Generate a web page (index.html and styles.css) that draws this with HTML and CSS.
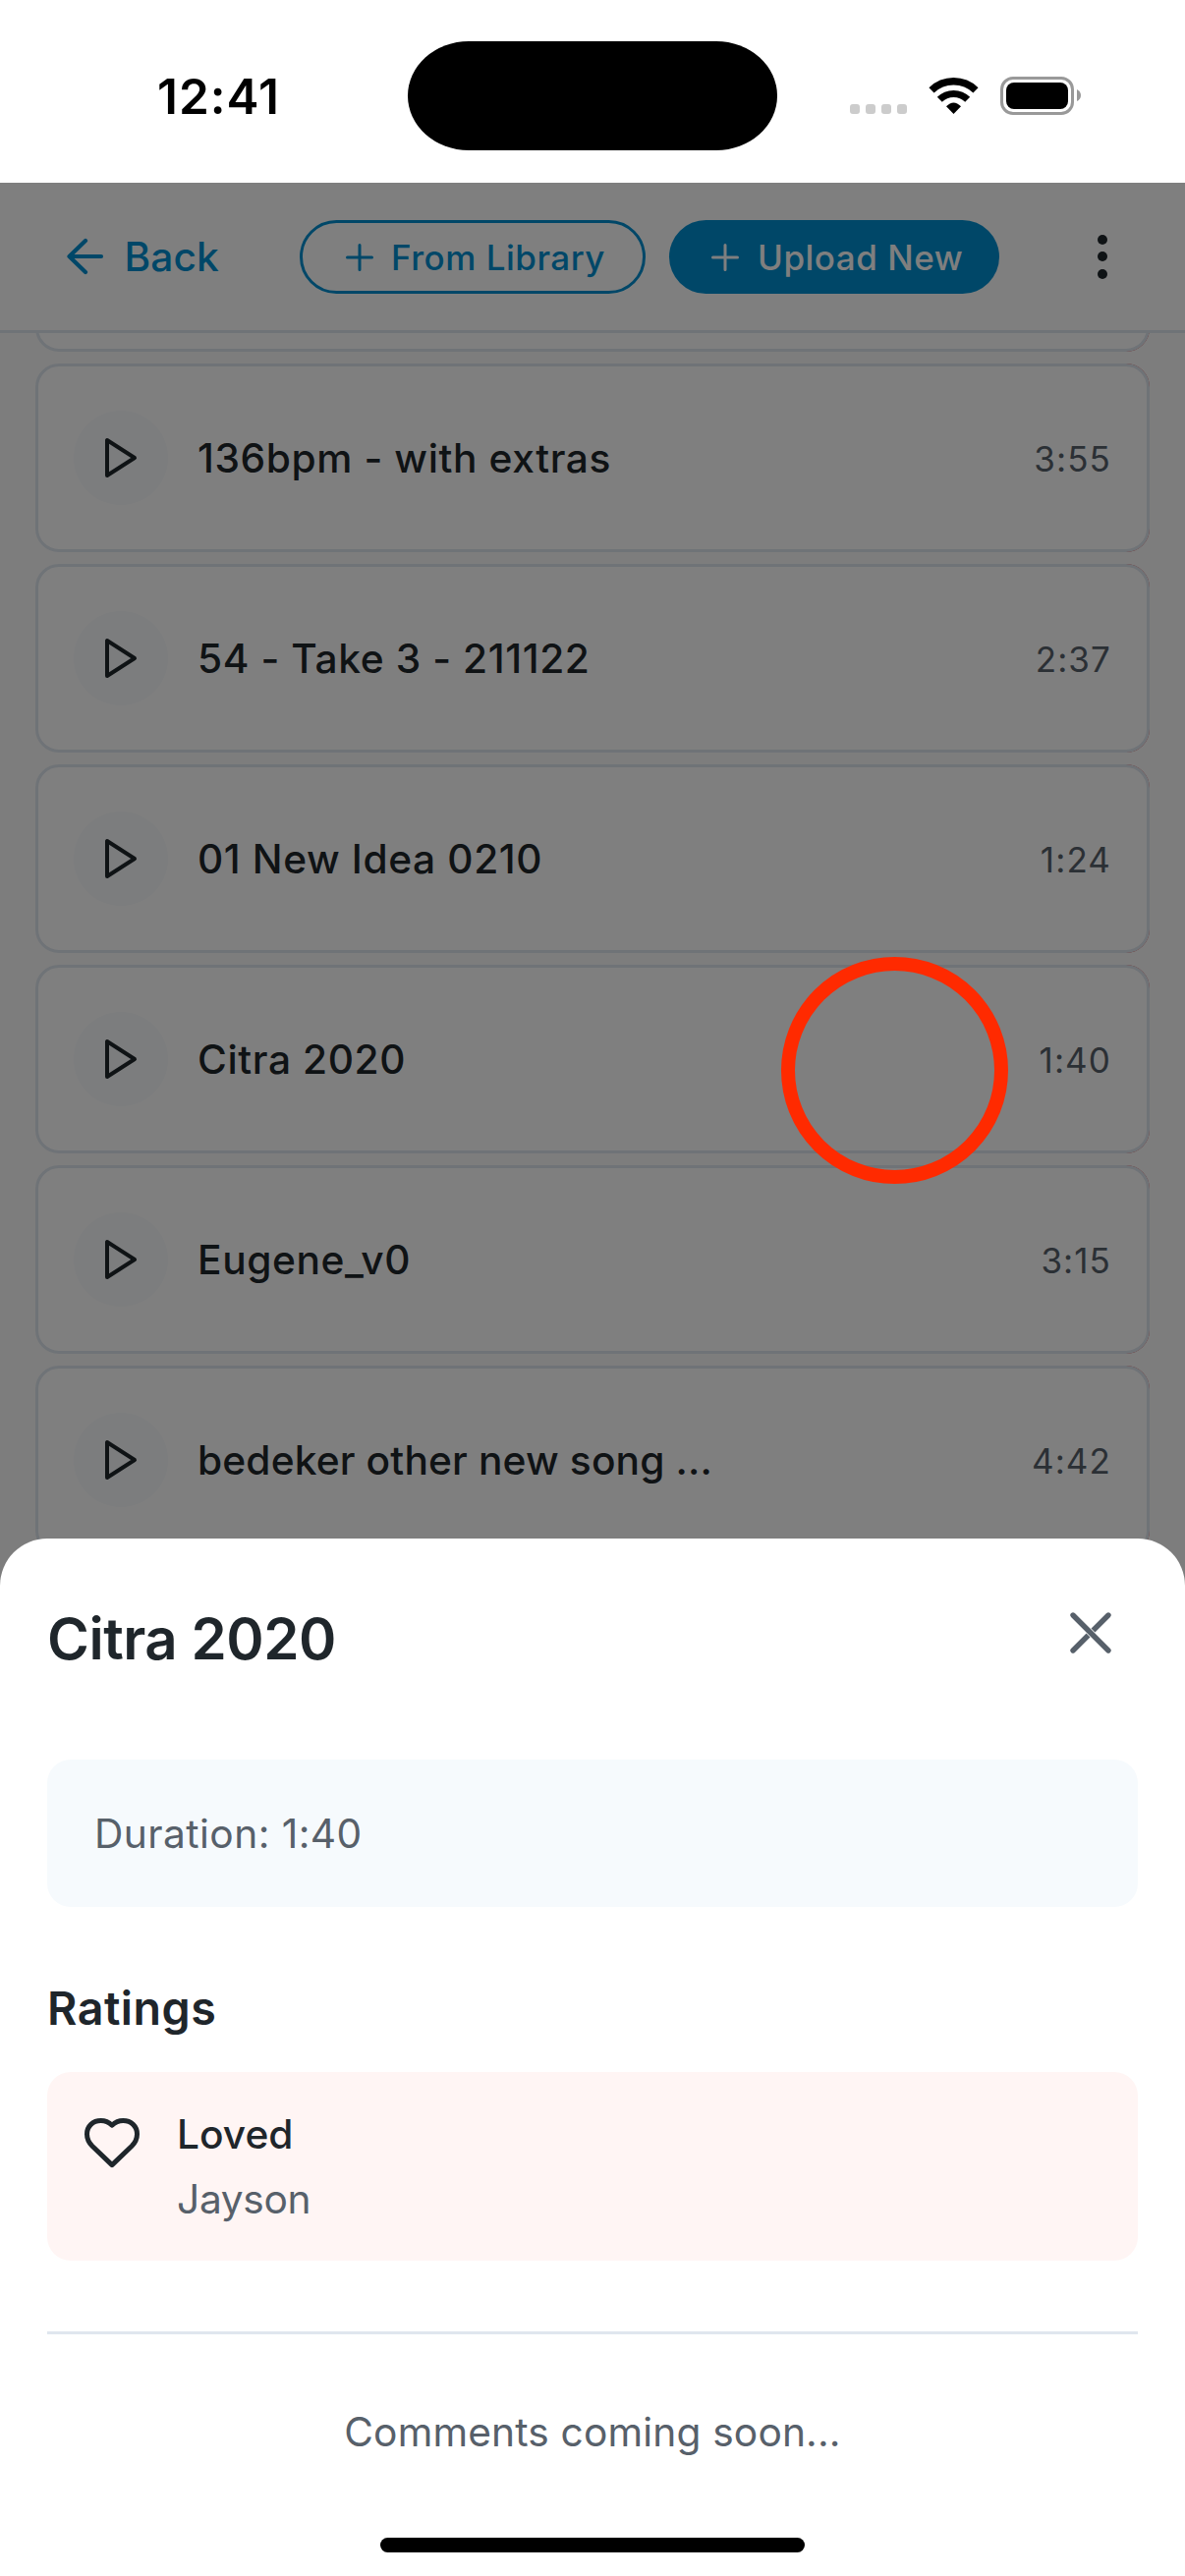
FILE: index.html
```html
<!DOCTYPE html>
<html lang="en">
<head>
<meta charset="utf-8">
<title>Citra 2020</title>
<link rel="stylesheet" href="styles.css">
</head>
<body>
<svg class="defs" width="0" height="0" aria-hidden="true">
  <symbol id="play" viewBox="0 0 48 48"><path d="M10 6V42L38 24Z" fill="none" stroke="currentColor" stroke-width="4" stroke-linejoin="round"/></symbol>
  <symbol id="plus" viewBox="0 0 28 28"><path d="M14 1.5V26.5M1.5 14H26.5" fill="none" stroke="currentColor" stroke-width="3" stroke-linecap="round"/></symbol>
</svg>

<div class="status">
  <div class="clock">12:41</div>
  <div class="island"></div>
  <div class="indicators">
    <div class="signal"><i></i><i></i><i></i><i></i></div>
    <svg class="wifi" viewBox="0 0 51 39"><g fill="none" stroke="#000"><path d="M3 13.8A32.4 32.4 0 0 1 48 13.8" stroke-width="7.4"/><path d="M11.3 23.3A20 20 0 0 1 39.7 23.3" stroke-width="7"/></g><path d="M18 30.2Q25.5 22.6 33 30.2L25.5 38Z"/></svg>
    <div class="battery"><div class="charge"></div></div>
    <svg class="nub" viewBox="0 0 4 12"><path d="M0 0Q4 2 4 6Q4 10 0 12Z" fill="#999"/></svg>
  </div>
</div>

<div class="screen">
  <header class="topbar">
    <a class="back">
      <svg class="arrow" viewBox="0 0 42 42"><path d="M21 5L4.5 21L21 37M4.5 21H37" fill="none" stroke="currentColor" stroke-width="4.2" stroke-linecap="round" stroke-linejoin="round"/></svg>
      <span>Back</span>
    </a>
    <a class="btn outline"><svg class="plus"><use href="#plus"/></svg><span>From Library</span></a>
    <a class="btn filled"><svg class="plus"><use href="#plus"/></svg><span>Upload New</span></a>
    <div class="menu"><i></i><i></i><i></i></div>
  </header>

  <main class="list">
    <div class="swipe"><div class="card"></div></div>
    <div class="swipe"><div class="card"><div class="play"><svg><use href="#play"/></svg></div><span class="name">136bpm - with extras</span><span class="time">3:55</span></div></div>
    <div class="swipe"><div class="card"><div class="play"><svg><use href="#play"/></svg></div><span class="name">54 - Take 3 - 211122</span><span class="time">2:37</span></div></div>
    <div class="swipe"><div class="card"><div class="play"><svg><use href="#play"/></svg></div><span class="name">01 New Idea 0210</span><span class="time">1:24</span></div></div>
    <div class="swipe"><div class="card"><div class="play"><svg><use href="#play"/></svg></div><span class="name">Citra 2020</span><span class="time">1:40</span></div></div>
    <div class="swipe"><div class="card"><div class="play"><svg><use href="#play"/></svg></div><span class="name">Eugene_v0</span><span class="time">3:15</span></div></div>
    <div class="swipe"><div class="card"><div class="play"><svg><use href="#play"/></svg></div><span class="name long">bedeker other new song ...</span><span class="time">4:42</span></div></div>
  </main>

  <div class="backdrop"></div>
  <div class="tap"></div>

  <section class="sheet">
    <div class="sheet-head">
      <h1>Citra 2020</h1>
      <svg class="close" viewBox="0 0 48 48"><g fill="none" stroke-linecap="round"><path d="M42 6L6 42" stroke="#57606a" stroke-width="5.4"/><path d="M17 17L31 31" stroke="#fff" stroke-width="7"/><path d="M6 6L42 42" stroke="#57606a" stroke-width="5.4"/></g></svg>
    </div>
    <div class="duration">Duration: 1:40</div>
    <h2>Ratings</h2>
    <div class="rating">
      <svg class="heart" viewBox="0 0 60 60"><path d="M30 12.3C26.5 9 22.5 7.6 18.7 7.6C10.5 7.6 4.5 13.2 4.5 21.2C4.5 26 6.3 29.8 10 33.5L30 52.6L50 33.5C53.7 29.8 55.5 26 55.5 21.2C55.5 13.2 49.5 7.6 41.3 7.6C37.5 7.6 33.5 9 30 12.3Z" fill="none" stroke="#1f262b" stroke-width="5" stroke-linejoin="round"/></svg>
      <div>
        <div class="label">Loved</div>
        <div class="who">Jayson</div>
      </div>
    </div>
    <p class="comments">Comments coming soon...</p>
    <div class="home"></div>
  </section>
</div>
</body>
</html>
```
FILE: styles.css
```css
* { box-sizing: border-box; margin: 0; padding: 0; }

body {
  width: 1206px;
  height: 2622px;
  overflow: hidden;
  background: #fff;
  color: #1f262b;
  font-family: Inter, "Liberation Sans", sans-serif;
  font-size: 40.7px;
}

svg { display: block; flex: none; }
.defs { position: absolute; }

/* Status bar */
.status { display: flex; height: 186px; }
.clock {
  width: 415px;
  padding: 68px 0 0 160px;
  font-size: 49.5px;
  font-weight: 600;
  line-height: 60px;
  letter-spacing: 1px;
  color: #000;
}
.island { width: 376px; height: 111px; margin-top: 41.5px; border-radius: 62px / 55.5px; background: #000; }
.indicators { display: flex; padding: 78px 0 0 74px; }
.signal { display: flex; gap: 6px; padding-top: 28px; }
.signal i { width: 10px; height: 10px; border-radius: 3px; background: #ccc; }
.wifi { width: 51px; height: 39px; margin-left: 22px; }
.battery { width: 75px; height: 39px; margin-left: 22px; padding: 3px; border: 3px solid #999; border-radius: 13px; }
.charge { height: 27px; border-radius: 8px; background: #000; }
.nub { width: 4px; height: 12px; margin: 13px 0 0 3px; }

/* Dimmed app behind the sheet */
.screen { position: relative; height: 2436px; overflow: hidden; background: #fafafa; }
.backdrop { position: absolute; inset: 0; background: rgba(0, 0, 0, .5); }

.topbar {
  display: flex;
  align-items: flex-start;
  height: 153px;
  padding: 38px 66px 0;
  border-bottom: 3px solid #dfe6ee;
  background: #fff;
}
.back {
  display: flex;
  align-items: center;
  gap: 18.5px;
  width: 239px;
  height: 75px;
  color: #008fd1;
  font-weight: 500;
  letter-spacing: .1px;
}
.arrow { width: 42px; height: 42px; margin-top: -1px; }
.btn {
  display: flex;
  align-items: center;
  gap: 18px;
  height: 75px;
  border-radius: 38px;
  font-size: 35px;
  font-weight: 500;
  letter-spacing: .5px;
}
.btn span { padding-top: 1px; }
.plus { width: 28px; height: 28px; }
.outline { width: 352px; padding-left: 44px; border: 3px solid #008fd1; color: #008fd1; }
.filled { width: 336px; margin-left: 24px; padding-left: 43px; gap: 19px; background: #008fd1; color: #fff; }
.menu { display: flex; flex-direction: column; gap: 7.5px; margin: 14.5px 13px 0 auto; }
.menu i { width: 10px; height: 10px; border-radius: 50%; background: #1f262b; }

.list { display: flex; flex-direction: column; gap: 12px; height: 1400px; padding: 0 36px; overflow: hidden; }
.swipe { flex: none; border-radius: 24px; background: linear-gradient(90deg, #fff 50%, #e5484d 50%); }
.swipe:first-child { margin-top: -173px; }
.card {
  display: flex;
  align-items: center;
  height: 192px;
  padding: 0 36px;
  border: 3px solid #dfe6ee;
  border-radius: 24px;
  background: #fff;
}
.play { display: flex; align-items: center; justify-content: center; width: 96px; height: 96px; border-radius: 50%; background: #f8fafc; }
.play svg { width: 48px; height: 48px; }
.name { margin-left: 30px; font-weight: 500; letter-spacing: .6px; white-space: nowrap; }
.name.long { letter-spacing: .15px; }
.time { margin-left: auto; padding-top: 2px; font-size: 35px; letter-spacing: 1.1px; color: #57606a; }

/* Touch indicator */
.tap { position: absolute; left: 795px; top: 788px; width: 231px; height: 231px; border: 14px solid #ff2a00; border-radius: 50%; }

/* Bottom sheet */
.sheet {
  position: absolute;
  left: 0;
  right: 0;
  bottom: 0;
  height: 1056px;
  padding: 60px 48px 0;
  border-radius: 48px 48px 0 0;
  background: #fff;
}
.sheet-head { display: flex; justify-content: space-between; height: 84px; padding-right: 24px; }
h1 { font-size: 58.2px; font-weight: 600; line-height: 84px; letter-spacing: -.46px; }
.close { width: 48px; height: 48px; margin-top: 12px; }
.duration {
  height: 150px;
  margin-top: 81px;
  padding-left: 48px;
  border-radius: 24px;
  background: #f6fafd;
  color: #57606a;
  line-height: 152px;
  letter-spacing: .43px;
}
h2 { margin: 71px 0 33px; font-size: 46.6px; font-weight: 600; line-height: 64px; letter-spacing: .5px; }
.rating { display: flex; gap: 36px; height: 192px; padding: 31px 36px; border-radius: 24px; background: #fff5f4; line-height: 66px; }
.heart { width: 60px; height: 60px; margin-top: 11px; }
.label { font-weight: 500; }
.who { color: #57606a; letter-spacing: -.34px; }
.comments { margin-top: 72px; padding-top: 70px; border-top: 3px solid #dfe6ee; color: #57606a; line-height: 60px; letter-spacing: .15px; text-align: center; }
.home { width: 432px; height: 15px; margin: 77px auto 0; border-radius: 8px; background: #000; }
```
